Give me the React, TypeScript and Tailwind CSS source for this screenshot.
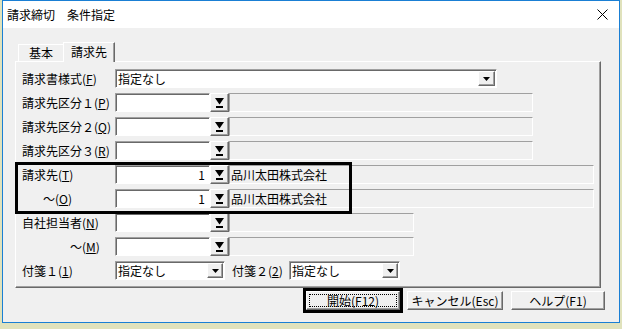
import React from "react";

const raised =
  "bg-[#f0f0f0] border border-t-white border-l-white border-r-[#696969] border-b-[#696969] shadow-[inset_-1px_-1px_0_#a0a0a0]";
const sunken =
  "bg-white border border-t-[#a0a0a0] border-l-[#a0a0a0] border-r-white border-b-white shadow-[inset_1px_1px_0_#696969]";
const readonly =
  "bg-[#f0f0f0] border border-t-[#a0a0a0] border-l-[#a0a0a0] border-r-white border-b-white";

function PickIcon() {
  return (
    <svg width="9" height="10" viewBox="0 0 9 10">
      <polygon points="0,0 9,0 4.5,6.5" fill="black" />
      <rect x="1" y="8" width="7" height="2" fill="black" />
    </svg>
  );
}

function ComboArrow() {
  return (
    <svg width="7" height="4" viewBox="0 0 7 4">
      <polygon points="0,0 7,0 3.5,4" fill="black" />
    </svg>
  );
}

function Combo({ width, btn, value }: { width: string; btn: string; value: string }) {
  return (
    <div className={`${sunken} ${width} h-[19px] flex items-stretch`}>
      <div className="flex-1 pl-[2px] pt-[1px] leading-[16px]">{value}</div>
      <div className={`${raised} ${btn} my-[1px] mr-[1px] flex items-center justify-center`}>
        <ComboArrow />
      </div>
    </div>
  );
}

function PickRow({
  label,
  labelClass,
  value,
  name,
  roWidth,
}: {
  label: React.ReactNode;
  labelClass: string;
  value: string;
  name: string;
  roWidth: string;
}) {
  return (
    <div className="flex items-center h-[19px]">
      <div className={`w-[93px] shrink-0 ${labelClass}`}>{label}</div>
      <div className={`${sunken} w-[95px] h-[19px] text-right pr-[4px] leading-[17px]`}>{value}</div>
      <div className={`${raised} w-[19px] h-[19px] flex items-center justify-center`}>
        <PickIcon />
      </div>
      <div className={`${readonly} ${roWidth} h-[19px] leading-[17px] pl-[1px]`}>{name}</div>
    </div>
  );
}

export default function App() {
  return (
    <div
      className="relative w-[622px] h-[329px] bg-[#e0e2bc] text-[12px] text-black"
      style={{ fontFamily: '"Noto Sans CJK JP", "Noto Sans", sans-serif' }}
    >
      <div className="ml-[2px] w-[618px] h-[323px] border border-[#1a7fd4] bg-[#f0f0f0] flex flex-col">
        {/* title bar */}
        <div className="h-[27px] bg-white flex items-center justify-between pl-[4px] pr-[11px]">
          <div className="text-[12px] leading-[16px] pt-[1px]">請求締切　条件指定</div>
          <svg width="11" height="11" viewBox="0 0 11 11">
            <line x1="0.5" y1="0.5" x2="10.5" y2="10.5" stroke="black" strokeWidth="1" />
            <line x1="10.5" y1="0.5" x2="0.5" y2="10.5" stroke="black" strokeWidth="1" />
          </svg>
        </div>

        {/* tabs */}
        <div className="h-[33px] flex items-end pl-[15px]">
          <div className="h-[17px] w-[45px] border-t border-l border-t-white border-l-white flex items-center justify-center leading-[16px]">
            基本
          </div>
          <div className="relative z-10 -mb-[1px] h-[20px] w-[52px] bg-[#f0f0f0] border-t border-l border-r border-t-white border-l-white border-r-[#696969] shadow-[inset_-1px_0_0_#a0a0a0] flex items-center justify-center leading-[16px] pb-[1px]">
            請求先
          </div>
        </div>

        {/* panel */}
        <div className={`ml-[12px] w-[586px] h-[227px] border border-t-white border-l-white border-r-[#696969] border-b-[#696969] shadow-[inset_-1px_-1px_0_#a0a0a0] pt-[7px] pl-[6px] flex flex-col gap-[5px] leading-[19px]`}>
          <div className="flex items-center h-[19px]">
            <div className="w-[93px] shrink-0">
              請求書様式(<u>F</u>)
            </div>
            <Combo width="w-[382px]" btn="w-[17px]" value="指定なし" />
          </div>
          <PickRow label={<>請求先区分１(<u>P</u>)</>} labelClass="" value="" name="" roWidth="w-[304px]" />
          <PickRow label={<>請求先区分２(<u>Q</u>)</>} labelClass="" value="" name="" roWidth="w-[304px]" />
          <PickRow label={<>請求先区分３(<u>R</u>)</>} labelClass="" value="" name="" roWidth="w-[304px]" />
          <PickRow label={<>請求先(<u>T</u>)</>} labelClass="" value="1" name="品川太田株式会社" roWidth="w-[365px]" />
          <PickRow label={<>～(<u>O</u>)</>} labelClass="pl-[21px]" value="1" name="品川太田株式会社" roWidth="w-[365px]" />
          <PickRow label={<>自社担当者(<u>N</u>)</>} labelClass="" value="" name="" roWidth="w-[185px]" />
          <PickRow label={<>～(<u>M</u>)</>} labelClass="pl-[48px]" value="" name="" roWidth="w-[185px]" />
          <div className="flex items-center h-[19px]">
            <div className="w-[93px] shrink-0">
              付箋１(<u>1</u>)
            </div>
            <Combo width="w-[110px]" btn="w-[16px]" value="指定なし" />
            <div className="ml-[7px] w-[57px]">
              付箋２(<u>2</u>)
            </div>
            <Combo width="w-[111px]" btn="w-[16px]" value="指定なし" />
          </div>
        </div>

        {/* buttons */}
        <div className="h-[25px] flex items-center justify-end pr-[14px] leading-[16px]">
          <div className="w-[100px] h-[25px] border-[3px] border-black flex">
            <div className={`${raised} relative flex-1 flex items-center justify-center`}>
              <div className="absolute inset-[2px] border border-dotted border-black" />
              開始(F12)
            </div>
          </div>
          <div className={`${raised} ml-[4px] w-[96px] h-[19px] flex items-center justify-center`}>
            キャンセル(Esc)
          </div>
          <div className={`${raised} ml-[8px] w-[94px] h-[19px] flex items-center justify-center`}>
            ヘルプ(F1)
          </div>
        </div>
      </div>

      {/* annotation highlight */}
      <div className="absolute left-[15px] top-[162px] w-[337px] h-[52px] border-[3px] border-black pointer-events-none" />
    </div>
  );
}
